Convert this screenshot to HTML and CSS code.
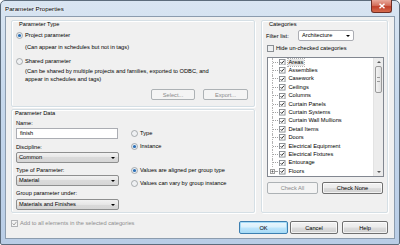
FILE: index.html
```html
<!DOCTYPE html>
<html lang="en">

<head>
    <meta charset="UTF-8">
    <title>Parameter Properties</title>
    <link rel="stylesheet" href="styles.css">
</head>

<body>
    <div class="window">

        <div class="titlebar">
            <span class="title">Parameter Properties</span>
            <span class="close">
                <svg width="8" height="6" viewBox="0 0 8 6"><path d="M1.5 0.8 L6.5 5.2 M6.5 0.8 L1.5 5.2" stroke="#fff" stroke-width="1.5"/></svg>
            </span>
        </div>

        <div class="client">
            <div class="panels">

                <div class="left">
                    <section class="group group-type">
                        <div class="group-label">Parameter Type</div>
                        <div class="radio-row row-project">
                            <svg class="radio" viewBox="0 0 7 7"><circle cx="3.5" cy="3.5" r="3" fill="#e9eef3" stroke="#8a8f94" stroke-width="0.7"/><circle cx="3.5" cy="3.5" r="1.6" fill="#2b6fb6"/></svg>
                            <span>Project parameter</span>
                        </div>
                        <div class="hint">(Can appear in schedules but not in tags)</div>
                        <div class="radio-row row-shared">
                            <svg class="radio" viewBox="0 0 7 7"><circle cx="3.5" cy="3.5" r="3" fill="#eef0f2" stroke="#8a8f94" stroke-width="0.7"/></svg>
                            <span>Shared parameter</span>
                        </div>
                        <div class="hint hint-shared">(Can be shared by multiple projects and families, exported to ODBC, and<br>appear in schedules and tags)</div>
                        <div class="type-buttons">
                            <span class="btn disabled btn-select">Select...</span>
                            <span class="btn disabled btn-export">Export...</span>
                        </div>
                    </section>

                    <section class="group group-data">
                        <div class="group-label">Parameter Data</div>
                        <div class="data-cols">
                            <div class="data-fields">
                                <div class="field-label">Name:</div>
                                <div class="textbox">finish</div>
                                <div class="field-label gap-4">Discipline:</div>
                                <div class="combo">Common</div>
                                <div class="field-label gap-3">Type of Parameter:</div>
                                <div class="combo">Material</div>
                                <div class="field-label gap-3">Group parameter under:</div>
                                <div class="combo combo-last">Materials and Finishes</div>
                            </div>
                            <div class="data-options">
                                <div class="radio-row opt-type">
                                    <svg class="radio" viewBox="0 0 7 7"><circle cx="3.5" cy="3.5" r="3" fill="#eef0f2" stroke="#8a8f94" stroke-width="0.7"/></svg>
                                    <span>Type</span>
                                </div>
                                <div class="radio-row opt-near">
                                    <svg class="radio" viewBox="0 0 7 7"><circle cx="3.5" cy="3.5" r="3" fill="#e9eef3" stroke="#8a8f94" stroke-width="0.7"/><circle cx="3.5" cy="3.5" r="1.6" fill="#2b6fb6"/></svg>
                                    <span>Instance</span>
                                </div>
                                <div class="radio-row opt-group">
                                    <svg class="radio" viewBox="0 0 7 7"><circle cx="3.5" cy="3.5" r="3" fill="#e9eef3" stroke="#8a8f94" stroke-width="0.7"/><circle cx="3.5" cy="3.5" r="1.6" fill="#2b6fb6"/></svg>
                                    <span>Values are aligned per group type</span>
                                </div>
                                <div class="radio-row opt-near">
                                    <svg class="radio" viewBox="0 0 7 7"><circle cx="3.5" cy="3.5" r="3" fill="#eef0f2" stroke="#8a8f94" stroke-width="0.7"/></svg>
                                    <span>Values can vary by group instance</span>
                                </div>
                            </div>
                        </div>
                    </section>
                </div>

                <section class="group group-cat">
                    <div class="group-label">Categories</div>
                    <div class="filter-row">
                        <span class="filter-label">Filter list:</span>
                        <div class="combo combo-white">Architecture</div>
                    </div>
                    <div class="check-row hide-row">
                        <svg class="check" viewBox="0 0 7 7"><rect x="0.5" y="0.5" width="6" height="6" fill="#eef0f2" stroke="#8a8f94"/></svg>
                        <span>Hide un-checked categories</span>
                    </div>

                    <div class="tree">
                        <div class="tree-items">
                            <div class="tree-item"><span class="branch"></span><svg class="check" viewBox="0 0 7 7"><rect x="0.5" y="0.5" width="6" height="6" fill="#fff" stroke="#8a8e93"/><path d="M1.7 3.4 L3 4.8 L5.4 1.9" fill="none" stroke="#222" stroke-width="1"/></svg><span class="item-text selected">Areas</span></div>
                            <div class="tree-item"><span class="branch"></span><svg class="check" viewBox="0 0 7 7"><rect x="0.5" y="0.5" width="6" height="6" fill="#fff" stroke="#8a8e93"/><path d="M1.7 3.4 L3 4.8 L5.4 1.9" fill="none" stroke="#222" stroke-width="1"/></svg><span class="item-text">Assemblies</span></div>
                            <div class="tree-item"><span class="branch"></span><svg class="check" viewBox="0 0 7 7"><rect x="0.5" y="0.5" width="6" height="6" fill="#fff" stroke="#8a8e93"/><path d="M1.7 3.4 L3 4.8 L5.4 1.9" fill="none" stroke="#222" stroke-width="1"/></svg><span class="item-text">Casework</span></div>
                            <div class="tree-item"><span class="branch"></span><svg class="check" viewBox="0 0 7 7"><rect x="0.5" y="0.5" width="6" height="6" fill="#fff" stroke="#8a8e93"/><path d="M1.7 3.4 L3 4.8 L5.4 1.9" fill="none" stroke="#222" stroke-width="1"/></svg><span class="item-text">Ceilings</span></div>
                            <div class="tree-item"><span class="branch"></span><svg class="check" viewBox="0 0 7 7"><rect x="0.5" y="0.5" width="6" height="6" fill="#fff" stroke="#8a8e93"/><path d="M1.7 3.4 L3 4.8 L5.4 1.9" fill="none" stroke="#222" stroke-width="1"/></svg><span class="item-text">Columns</span></div>
                            <div class="tree-item"><span class="branch"></span><svg class="check" viewBox="0 0 7 7"><rect x="0.5" y="0.5" width="6" height="6" fill="#fff" stroke="#8a8e93"/><path d="M1.7 3.4 L3 4.8 L5.4 1.9" fill="none" stroke="#222" stroke-width="1"/></svg><span class="item-text">Curtain Panels</span></div>
                            <div class="tree-item"><span class="branch"></span><svg class="check" viewBox="0 0 7 7"><rect x="0.5" y="0.5" width="6" height="6" fill="#fff" stroke="#8a8e93"/><path d="M1.7 3.4 L3 4.8 L5.4 1.9" fill="none" stroke="#222" stroke-width="1"/></svg><span class="item-text">Curtain Systems</span></div>
                            <div class="tree-item"><span class="branch"></span><svg class="check" viewBox="0 0 7 7"><rect x="0.5" y="0.5" width="6" height="6" fill="#fff" stroke="#8a8e93"/><path d="M1.7 3.4 L3 4.8 L5.4 1.9" fill="none" stroke="#222" stroke-width="1"/></svg><span class="item-text">Curtain Wall Mullions</span></div>
                            <div class="tree-item"><span class="branch"></span><svg class="check" viewBox="0 0 7 7"><rect x="0.5" y="0.5" width="6" height="6" fill="#fff" stroke="#8a8e93"/><path d="M1.7 3.4 L3 4.8 L5.4 1.9" fill="none" stroke="#222" stroke-width="1"/></svg><span class="item-text">Detail Items</span></div>
                            <div class="tree-item"><span class="branch"></span><svg class="check" viewBox="0 0 7 7"><rect x="0.5" y="0.5" width="6" height="6" fill="#fff" stroke="#8a8e93"/><path d="M1.7 3.4 L3 4.8 L5.4 1.9" fill="none" stroke="#222" stroke-width="1"/></svg><span class="item-text">Doors</span></div>
                            <div class="tree-item"><span class="branch"></span><svg class="check" viewBox="0 0 7 7"><rect x="0.5" y="0.5" width="6" height="6" fill="#fff" stroke="#8a8e93"/><path d="M1.7 3.4 L3 4.8 L5.4 1.9" fill="none" stroke="#222" stroke-width="1"/></svg><span class="item-text">Electrical Equipment</span></div>
                            <div class="tree-item"><span class="branch"></span><svg class="check" viewBox="0 0 7 7"><rect x="0.5" y="0.5" width="6" height="6" fill="#fff" stroke="#8a8e93"/><path d="M1.7 3.4 L3 4.8 L5.4 1.9" fill="none" stroke="#222" stroke-width="1"/></svg><span class="item-text">Electrical Fixtures</span></div>
                            <div class="tree-item"><span class="branch"></span><svg class="check" viewBox="0 0 7 7"><rect x="0.5" y="0.5" width="6" height="6" fill="#fff" stroke="#8a8e93"/><path d="M1.7 3.4 L3 4.8 L5.4 1.9" fill="none" stroke="#222" stroke-width="1"/></svg><span class="item-text">Entourage</span></div>
                            <div class="tree-item"><span class="branch branch-plus"><svg viewBox="0 0 5 5" class="plus"><rect x="0.5" y="0.5" width="4" height="4" fill="#fff" stroke="#a0a0a0"/><path d="M1.3 2.5 H3.7 M2.5 1.3 V3.7" stroke="#444" stroke-width="0.6"/></svg></span><svg class="check" viewBox="0 0 7 7"><rect x="0.5" y="0.5" width="6" height="6" fill="#fff" stroke="#8a8e93"/><path d="M1.7 3.4 L3 4.8 L5.4 1.9" fill="none" stroke="#222" stroke-width="1"/></svg><span class="item-text">Floors</span></div>
                        </div>
                        <div class="scrollbar">
                            <span class="arrow arrow-up"></span>
                            <span class="thumb"></span>
                            <span class="track"></span>
                            <span class="arrow arrow-down"></span>
                        </div>
                    </div>

                    <div class="check-buttons">
                        <span class="btn disabled btn-all">Check All</span>
                        <span class="btn btn-none">Check None</span>
                    </div>
                </section>
            </div>

            <div class="bottom">
                <div class="check-row add-all">
                    <svg class="check" viewBox="0 0 7 7"><rect x="0.5" y="0.5" width="6" height="6" fill="#f4f4f4" stroke="#b1b3b6"/><path d="M1.6 3.4 L3 5 L5.5 1.8" fill="none" stroke="#a3a3a3" stroke-width="1"/></svg>
                    <span>Add to all elements in the selected categories</span>
                </div>
                <div class="dialog-buttons">
                    <span class="btn btn-default btn-ok">OK</span>
                    <span class="btn btn-cancel">Cancel</span>
                    <span class="btn btn-help">Help</span>
                </div>
            </div>
        </div>
    </div>
</body>

</html>
```

FILE: styles.css
```css
body {
    margin: 0;
    font-family: "Liberation Sans", Arial, sans-serif;
    font-size: 5.7px;
    color: #000;
    background: #fff;
}

.window {
    width: 400px;
    height: 245px;
    box-sizing: border-box;
    border: 1px solid #5d6c7c;
    border-radius: 5px 5px 2px 2px;
    background: linear-gradient(#d9e5f2, #c6d8ec 40%, #b9cde6);
    display: flex;
    flex-direction: column;
}

/* title bar */

.titlebar {
    height: 15px;
    display: flex;
    align-items: flex-start;
}

.title {
    font-size: 6.2px;
    margin: 4px 0 0 4px;
    line-height: 7px;
    text-shadow: 0 0 3px #fff, 0 0 2px #fff;
}

.close {
    margin: -1px 7px 0 auto;
    width: 21px;
    height: 13px;
    box-sizing: border-box;
    border: 1px solid #6e2e25;
    border-top: none;
    border-radius: 0 0 3px 3px;
    background: linear-gradient(#e9a99a, #d4705c 45%, #c1402a 55%, #d66a4c);
    display: flex;
    align-items: center;
    justify-content: center;
}

/* client area */

.client {
    height: 223px;
    margin: 0 4px;
    box-sizing: border-box;
    border: 1px solid #8c9cae;
    background: #f0f0f0;
    padding: 3px 6px 0 5px;
    display: flex;
    flex-direction: column;
}

.panels {
    height: 193px;
    display: flex;
    gap: 6px;
}

.left {
    width: 244px;
    display: flex;
    flex-direction: column;
    gap: 2px;
}

.group {
    box-sizing: border-box;
    border: 1px solid #d5dfe5;
    border-radius: 2px;
    box-shadow: inset 1px 1px 0 #fff, 1px 1px 0 #fff;
    display: flex;
    flex-direction: column;
}

.group-label {
    line-height: 7px;
    height: 7px;
    margin: 0 0 0 3px;
}

/* parameter type */

.group-type {
    height: 87px;
    padding-left: 4px;
}

.radio-row,
.check-row {
    display: flex;
    align-items: center;
    height: 8px;
    line-height: 8px;
    white-space: nowrap;
}

.radio {
    width: 7px;
    height: 7px;
    margin-right: 2px;
    flex: none;
}

.check {
    width: 7px;
    height: 7px;
    flex: none;
}

.row-project {
    margin-top: 3px;
}

.hint {
    margin: 4px 0 0 9px;
    line-height: 8px;
}

.row-shared {
    margin-top: 6px;
}

.hint-shared {
    margin-top: 2px;
}

.type-buttons {
    display: flex;
    justify-content: flex-end;
    gap: 8px;
    margin: 6px 6px 0 0;
}

.btn {
    box-sizing: border-box;
    height: 11px;
    border: 1px solid #707070;
    border-radius: 2px;
    background: linear-gradient(#f2f2f2, #ebebeb 48%, #dddddd 52%, #cfcfcf);
    display: flex;
    align-items: center;
    justify-content: center;
    box-shadow: inset 0 0 0 1px rgba(255, 255, 255, 0.7);
}

.btn.disabled {
    border-color: #adb2b5;
    background: #f4f4f4;
    color: #8a8a8a;
    box-shadow: none;
}

.btn-select {
    width: 44px;
}

.btn-export {
    width: 45px;
}

/* parameter data */

.group-data {
    height: 104px;
}

.data-cols {
    display: flex;
    margin: 2px 0 0 4px;
}

.data-fields {
    width: 103px;
    display: flex;
    flex-direction: column;
}

.field-label {
    line-height: 8px;
    height: 8px;
    margin-bottom: 1px;
}

.gap-4 {
    margin-top: 4px;
}

.gap-3 {
    margin-top: 3px;
}

.combo-last {
    margin-top: 1px;
}

.textbox {
    box-sizing: border-box;
    height: 11px;
    width: 102px;
    border: 1px solid #abadb3;
    background: #fff;
    padding-left: 3px;
    line-height: 9px;
}

.combo {
    box-sizing: border-box;
    height: 11px;
    border: 1px solid #8e8f8f;
    border-radius: 2px;
    background: linear-gradient(#f2f2f2, #e6e6e6 50%, #dadada 50%, #d6d6d6);
    padding-left: 2px;
    line-height: 9px;
    display: flex;
    align-items: center;
}

.combo::after {
    content: "";
    margin: 0 3px 0 auto;
    border-top: 2.5px solid #000;
    border-left: 2px solid transparent;
    border-right: 2px solid transparent;
}

.combo-white {
    background: #fff;
    border-color: #abadb3;
    width: 56px;
    padding-left: 3px;
}

.data-options {
    margin-left: 12px;
    display: flex;
    flex-direction: column;
}

.opt-type {
    margin-top: 10px;
}

.opt-near {
    margin-top: 5px;
}

.opt-group {
    margin-top: 16px;
}

/* categories */

.group-cat {
    width: 127px;
    padding: 0 3px 0 4px;
}

.filter-row {
    display: flex;
    align-items: center;
    margin-top: 2px;
    height: 11px;
}

.filter-label {
    width: 32px;
}

.hide-row {
    margin: 3px 0 0 1px;
}

.hide-row .check,
.add-all .check {
    margin-right: 2px;
}

.tree {
    margin: 5px 0 0 1px;
    width: 117px;
    height: 120px;
    box-sizing: border-box;
    border: 1px solid #828790;
    background: #fff;
    display: flex;
    overflow: hidden;
}

.tree-items {
    flex: 1;
    padding: 0 0 0 4px;
}

.tree-item {
    height: 8.4px;
    display: flex;
    align-items: center;
    white-space: nowrap;
}

.branch {
    align-self: stretch;
    width: 6px;
    box-sizing: border-box;
    border-left: 1px dotted #b4b4b4;
    display: flex;
    align-items: center;
}

.branch::after {
    content: "";
    width: 5px;
    border-top: 1px dotted #a0a0a0;
}

.branch-plus {
    border-left: none;
    margin-left: -2px;
    width: 8px;
}

.branch-plus::after {
    width: 2px;
}

.plus {
    width: 5px;
    height: 5px;
    flex: none;
}

.tree-item .check {
    margin-left: 1px;
    width: 6.5px;
    height: 6.5px;
}

.item-text {
    margin-left: 2px;
    padding: 0 1px;
    line-height: 7px;
}

.item-text.selected {
    background: #e6e6e6;
    outline: 1px dotted #b0b0b0;
}

.scrollbar {
    width: 9px;
    flex: none;
    display: flex;
    flex-direction: column;
    align-items: center;
    background: #ececec;
    border-left: 1px solid #e3e3e3;
}

.arrow {
    height: 8px;
    width: 100%;
    display: flex;
    align-items: center;
    justify-content: center;
}

.arrow-up::after {
    content: "";
    border-bottom: 2px solid #5b5b5b;
    border-left: 2px solid transparent;
    border-right: 2px solid transparent;
}

.arrow-down::after {
    content: "";
    border-top: 2px solid #5b5b5b;
    border-left: 2px solid transparent;
    border-right: 2px solid transparent;
}

.thumb {
    width: 7px;
    height: 27px;
    box-sizing: border-box;
    border: 1px solid #9a9a9a;
    border-radius: 2px;
    background: linear-gradient(90deg, #f3f3f3, #e0e0e0);
    display: flex;
    align-items: center;
    justify-content: center;
}

.thumb::after {
    content: "";
    width: 3px;
    height: 3px;
    border-top: 1px solid #9a9a9a;
    border-bottom: 1px solid #9a9a9a;
}

.track {
    flex: 1;
}

.check-buttons {
    display: flex;
    gap: 4px;
    margin: 5px 0 0 1px;
}

.check-buttons .btn {
    height: 12px;
}

.btn-all {
    width: 51px;
}

.btn-none {
    width: 61px;
}

/* bottom row */

.bottom {
    display: flex;
    margin-top: 6px;
}

.add-all {
    color: #8d8d8d;
    align-self: flex-start;
}

.dialog-buttons {
    margin: 2px 0 0 auto;
    display: flex;
}

.dialog-buttons .btn {
    height: 13px;
}

.btn-ok {
    width: 49px;
}

.btn-cancel {
    width: 48px;
    margin-left: 2px;
}

.btn-help {
    width: 46px;
    margin-left: 4px;
}

.btn-default {
    border-color: #3c7fb1;
    box-shadow: inset 0 0 0 1px #a6dcf7;
    background: linear-gradient(#eaf6fd, #d9f0fc 48%, #bee6fd 52%, #a7d9f5);
}
```
